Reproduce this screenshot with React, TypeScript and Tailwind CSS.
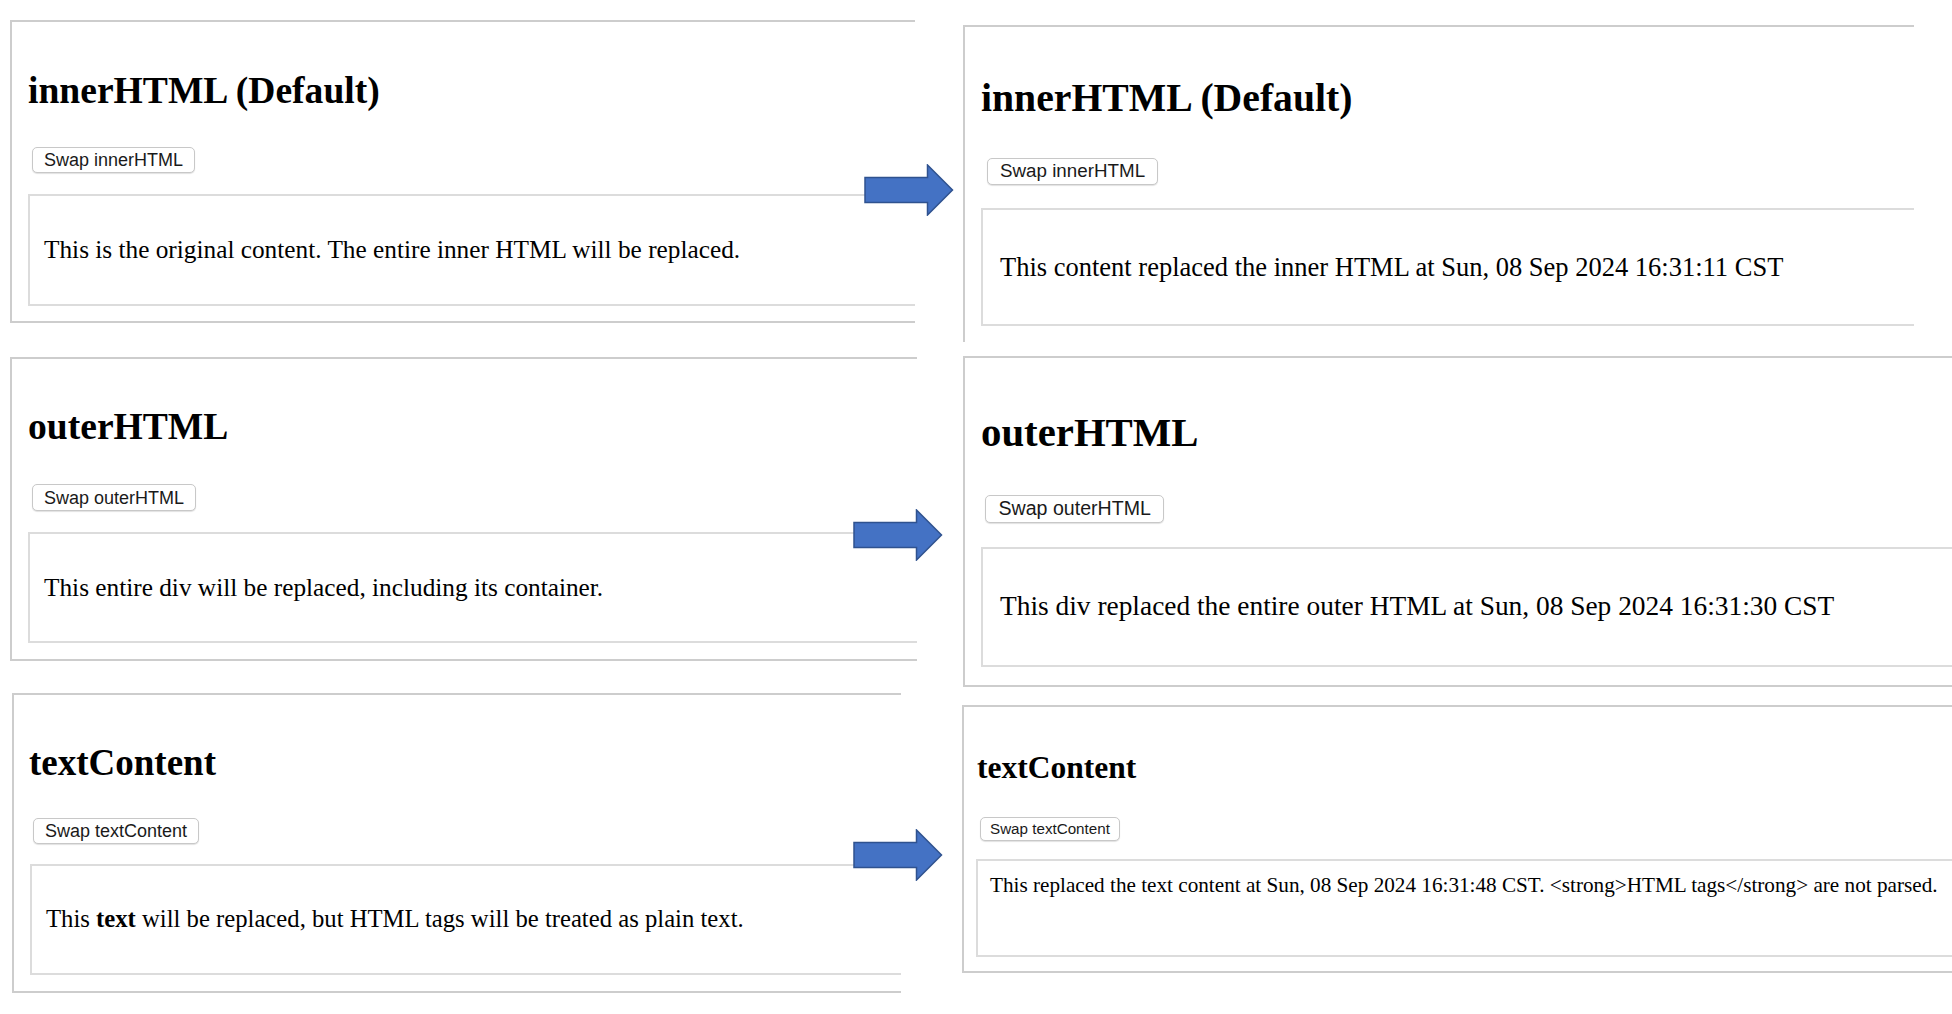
import React from 'react';

interface PanelProps {
  title: string;
  label: string;
  frame: string;
  heading: string;
  button: string;
  box: string;
  children: React.ReactNode;
}

const btnBase =
  "flex items-center justify-center rounded-[5px] border border-[#c8c8c8] bg-white font-['Liberation_Sans',Arial,sans-serif] leading-none text-[#1a1a1a] shadow-[0_1px_1px_rgba(0,0,0,0.12)]";
const boxBase = 'self-stretch border-2 border-r-0 border-[#dcdcdc] leading-none';
const frameBase = 'flex flex-col items-start border-[#cdcdcd]';

const Panel: React.FC<PanelProps> = ({ title, label, frame, heading, button, box, children }) => (
  <section className={`${frameBase} ${frame}`}>
    <h2 className={`font-bold leading-none ${heading}`}>{title}</h2>
    <button type="button" className={`${btnBase} ${button}`}>
      {label}
    </button>
    <div className={`${boxBase} ${box}`}>{children}</div>
  </section>
);

const Arrow = ({ className }: { className: string }) => (
  <svg className={className} width="90" height="52" viewBox="0 0 90 52">
    <polygon
      points="1,13.5 63.5,13.5 63.5,1 88.5,26 63.5,51 63.5,38.5 1,38.5"
      fill="#4472C4"
      stroke="#2F528F"
      strokeWidth="1.5"
    />
  </svg>
);

export default function App() {
  return (
    <div className="relative min-h-[1014px] overflow-hidden whitespace-nowrap bg-white font-['Liberation_Serif','Times_New_Roman',serif] text-black">
      <div className="flex items-start">
        {/* before */}
        <div className="ml-[10px] flex w-[911px] shrink-0 flex-col items-start">
          <Panel
            title="innerHTML (Default)"
            label="Swap innerHTML"
            frame="mt-[20px] w-[905px] border-2 border-r-0 pl-[16px] pt-[50px] pb-[15px]"
            heading="text-[37.6px]"
            button="mt-[37.5px] ml-[4px] h-[26px] px-[11px] text-[18px]"
            box="mt-[21px] flex h-[112px] items-center pl-[14px] text-[25.3px]"
          >
            This is the original content. The entire inner HTML will be replaced.
          </Panel>

          <Panel
            title="outerHTML"
            label="Swap outerHTML"
            frame="mt-[33.5px] w-[907px] border-2 border-r-0 pl-[16px] pt-[49px] pb-[16px]"
            heading="text-[37.6px]"
            button="mt-[39px] ml-[4px] h-[27px] px-[11px] text-[18px]"
            box="mt-[21px] flex h-[111px] items-center pl-[14px] text-[25.3px]"
          >
            This entire div will be replaced, including its container.
          </Panel>

          <Panel
            title="textContent"
            label="Swap textContent"
            frame="mt-[31.5px] ml-[2px] w-[889px] border-2 border-r-0 pl-[16px] pt-[49px] pb-[16px]"
            heading="-ml-px text-[37px]"
            button="mt-[37px] ml-[3px] h-[26px] px-[11px] text-[18px]"
            box="mt-[20px] flex h-[111px] items-center pl-[14px] text-[24.7px]"
          >
            <span>
              This <strong className="font-bold">text</strong> will be replaced, but HTML tags will be treated as plain text.
            </span>
          </Panel>
        </div>

        {/* after */}
        <div className="ml-[42px] flex min-w-0 flex-1 flex-col">
          <Panel
            title="innerHTML (Default)"
            label="Swap innerHTML"
            frame="mt-[25px] w-[951px] border-t-2 border-l-2 pl-[16px] pt-[52px] pb-[16px]"
            heading="text-[39.7px]"
            button="mt-[39.5px] ml-[6px] h-[27px] px-[12px] text-[18.8px]"
            box="mt-[23px] flex h-[118px] items-center pl-[17px] text-[26.5px]"
          >
            This content replaced the inner HTML at Sun, 08 Sep 2024 16:31:11 CST
          </Panel>

          <Panel
            title="outerHTML"
            label="Swap outerHTML"
            frame="mt-[14px] border-2 border-r-0 pl-[16px] pt-[55px] pb-[18px]"
            heading="text-[40.8px]"
            button="mt-[41px] ml-[4px] h-[28px] px-[12.5px] text-[19.6px]"
            box="mt-[24px] flex h-[120px] items-center pl-[17px] text-[27.4px]"
          >
            This div replaced the entire outer HTML at Sun, 08 Sep 2024 16:31:30 CST
          </Panel>

          <Panel
            title="textContent"
            label="Swap textContent"
            frame="mt-[18px] -ml-px border-2 border-r-0 pl-[12px] pt-[45px] pb-[14px]"
            heading="ml-[1px] text-[31.5px]"
            button="mt-[33.5px] ml-[4px] h-[24px] px-[9px] text-[15.2px]"
            box="mt-[18px] h-[98px] pl-[12px] pt-[14px] text-[21.2px]"
          >
            This replaced the text content at Sun, 08 Sep 2024 16:31:48 CST. &lt;strong&gt;HTML tags&lt;/strong&gt; are not parsed.
          </Panel>
        </div>
      </div>

      {/* arrows */}
      <Arrow className="absolute left-[864px] top-[164px]" />
      <Arrow className="absolute left-[853px] top-[509px]" />
      <Arrow className="absolute left-[853px] top-[829px]" />
    </div>
  );
}
